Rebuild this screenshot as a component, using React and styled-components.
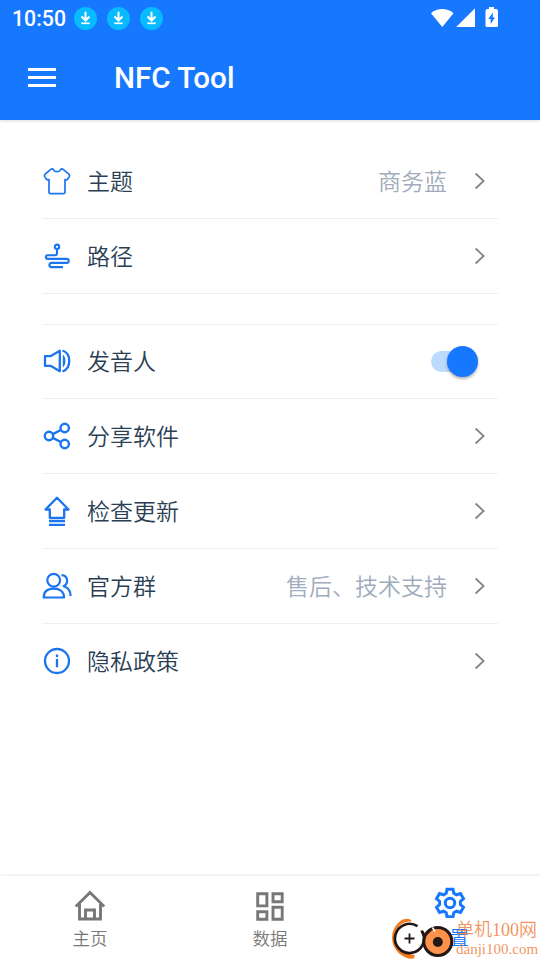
import { useState } from "react";
import styled, { createGlobalStyle } from "styled-components";

const BLUE = "#1677ff";

const rowGroups = [
  [
    { id: "theme", label: "主题", value: "商务蓝", icon: ShirtIcon },
    { id: "path", label: "路径", icon: PathIcon },
  ],
  [
    { id: "speaker", label: "发音人", icon: SpeakerIcon, toggle: true },
    { id: "share", label: "分享软件", icon: ShareIcon },
    { id: "update", label: "检查更新", icon: UpdateIcon },
    { id: "group", label: "官方群", value: "售后、技术支持", icon: UsersIcon },
    { id: "privacy", label: "隐私政策", icon: InfoIcon },
  ],
];

const tabs = [
  { id: "home", label: "主页", icon: HomeIcon },
  { id: "data", label: "数据", icon: GridIcon },
  { id: "settings", label: "设置", icon: GearIcon },
];

function App() {
  const [activeTab, setActiveTab] = useState("settings");
  const [speakerOn, setSpeakerOn] = useState(true);

  return (
    <Screen>
      <GlobalStyle />
      <Header>
        <StatusBar>
          <Clock>10:50</Clock>
          <DownloadBadge />
          <DownloadBadge />
          <DownloadBadge />
          <StatusIcons />
        </StatusBar>
        <TitleBar>
          <MenuButton aria-label="menu">
            <span />
            <span />
            <span />
          </MenuButton>
          <h1>NFC Tool</h1>
        </TitleBar>
      </Header>

      <Content>
        {rowGroups.map((rows, i) => (
          <Group key={i} $divided={i > 0}>
            {rows.map(({ id, label, value, icon: Icon, toggle }, n) => (
              <Row key={id} $last={i > 0 && n === rows.length - 1}>
                <Icon />
                <RowLabel>{label}</RowLabel>
                {value && <RowValue>{value}</RowValue>}
                {toggle ? (
                  <Switch
                    role="switch"
                    aria-checked={speakerOn}
                    $on={speakerOn}
                    onClick={() => setSpeakerOn(!speakerOn)}
                  />
                ) : (
                  <ChevronIcon />
                )}
              </Row>
            ))}
          </Group>
        ))}
      </Content>

      <TabBar>
        {tabs.map(({ id, label, icon: Icon }) => (
          <Tab
            key={id}
            $active={activeTab === id}
            onClick={() => setActiveTab(id)}
          >
            <Icon />
            <span>{label}</span>
          </Tab>
        ))}
      </TabBar>

      {/* Site mark */}
      <Watermark>
        <MarkLogo />
        <MarkText>
          <strong>单机100网</strong>
          <small>danji100.com</small>
        </MarkText>
      </Watermark>
    </Screen>
  );
}

export default App;

function DownloadBadge() {
  return (
    <Badge>
      <svg width="23" height="23" viewBox="0 0 23 23" fill="none">
        <path d="M11.500 4.800v8.500M7.500 9.500l4 4 4-4" stroke="#fff" strokeWidth="2" />
        <path d="M7.300 16.300h8.400" stroke="#fff" strokeWidth="1.700" />
      </svg>
    </Badge>
  );
}

function StatusIcons() {
  return (
    <StatusSvg width="68" height="22" viewBox="0 0 68 22" fill="#fff">
      <path d="M0 6.200C6.500.6 16 .6 22.500 6.200L11.300 20z" />
      <path d="M44 1.200V20H25.200z" />
      <path
        fillRule="evenodd"
        d="M58 0h5v2h2a2 2 0 0 1 2 2v14.500a1.500 1.500 0 0 1-1.500 1.500h-9.500a1.500 1.500 0 0 1-1.500-1.500V4a2 2 0 0 1 2-2h1.500zM61.800 5.500l-4.500 6.500h2.400v5l4.300-6.500h-2.200z"
      />
    </StatusSvg>
  );
}

function ShirtIcon() {
  return (
    <RowSvg viewBox="0 0 30 30" strokeWidth="1.700">
      <path d="M8.800 3.400c1.300-.9 2.200-.6 2.900.8.800 2 5.800 2 6.600 0 .7-1.400 1.600-1.700 2.900-.8l5.700 4.800c.8.800.9 1.600.4 2.400l-1.600 2.400c-.6.900-1.500 1-2.700.6V26c0 1.100-.6 1.600-1.700 1.600H8.700c-1.100 0-1.700-.5-1.700-1.600V13.600c-1.200.4-2.100.3-2.700-.6l-1.600-2.400c-.5-.8-.4-1.600.4-2.400z" />
    </RowSvg>
  );
}

function PathIcon() {
  return (
    <RowSvg viewBox="0 0 30 30" strokeWidth="2.100">
      <circle cx="15" cy="5.800" r="2.200" />
      <path d="M15 8.300v4c0 1.200-.7 1.900-1.900 1.900H5.700a1.850 1.850 0 0 0 0 3.700h19a2 2 0 0 1 0 4H9.500a2.100 2.100 0 0 0 0 4.200H21" />
    </RowSvg>
  );
}

function SpeakerIcon() {
  return (
    <RowSvg viewBox="0 0 30 30" strokeWidth="2.300">
      <path d="M3 10.200h5.500L17.800 4.800v20.400l-9.300-5.400H3z" />
      <path d="M20.500 4.500C29.500 7.500 29.500 22.500 20.500 25.500" />
      <path d="M20.800 8.500c3.500 2.500 3.500 10.500 0 13z" fill="#1a75ee" stroke="none" />
    </RowSvg>
  );
}

function ShareIcon() {
  return (
    <RowSvg viewBox="0 0 30 30" strokeWidth="2.400">
      <circle cx="7" cy="15" r="4.200" />
      <circle cx="22.700" cy="7" r="4.200" />
      <circle cx="22.700" cy="23" r="4.200" />
      <path d="M10.800 13.100l8-4.100M10.800 16.900l8 4.100" />
    </RowSvg>
  );
}

function UpdateIcon() {
  return (
    <RowSvg viewBox="0 0 30 30" strokeWidth="2.300">
      <path d="M15 1.700L26.500 13.500h-4.300v8.300H7.800v-8.300H3.500z" />
      <path d="M7 25h16M7 28.800h16" />
    </RowSvg>
  );
}

function UsersIcon() {
  return (
    <RowSvg viewBox="0 0 30 30" strokeWidth="2.200">
      <circle cx="11.700" cy="9.200" r="6.400" />
      <path d="M1.700 26.500c0-6 4-8.900 10-8.900s10.400 2.900 10.400 8.900z" />
      <path d="M19.500 4.200c6.500.5 7.500 8.200 2.200 11 4.500 1.300 6.900 4.600 6.900 9.800" />
    </RowSvg>
  );
}

function InfoIcon() {
  return (
    <RowSvg viewBox="0 0 30 30" strokeWidth="2.300">
      <circle cx="15" cy="15" r="12" />
      <path d="M15 8.500v2.500M15 13v8.300" />
    </RowSvg>
  );
}

function ChevronIcon() {
  return (
    <svg width="12" height="18" viewBox="0 0 12 18" fill="none">
      <path d="M1.600 1.500L9.600 9l-8 7.500" stroke="#858585" strokeWidth="1.800" />
    </svg>
  );
}

function HomeIcon() {
  return (
    <TabSvg viewBox="0 0 32 32" strokeWidth="2.900">
      <path d="M1.800 17.500L16 3.500l14.200 14" />
      <path d="M5.500 15v15h21V15M11.500 30v-9h9v9" />
    </TabSvg>
  );
}

function GridIcon() {
  return (
    <TabSvg viewBox="0 0 32 32" strokeWidth="2.900">
      <path d="M3.700 4.700h9.200v12.200H3.700zM19 4.700h9.200v8.100H19zM3.700 22.800h9.200v7.500H3.700zM19 18.300h9.200v12H19z" />
    </TabSvg>
  );
}

function GearIcon() {
  return (
    <TabSvg viewBox="0 0 32 32" strokeWidth="3">
      <path d="M13 3.200h6l.8 4 2.700 1.600 4-1.300 3 5.200-3.100 2.700v3.200l3.100 2.700-3 5.200-4-1.300-2.700 1.600-.8 4h-6l-.8-4-2.700-1.600-4 1.300-3-5.200 3.100-2.700v-3.200l-3.100-2.700 3-5.200 4 1.300 2.700-1.600z" />
      <circle cx="16" cy="17" r="4.700" />
    </TabSvg>
  );
}

function MarkLogo() {
  return (
    <svg width="66" height="44" viewBox="0 0 66 44" fill="none">
      <path d="M22 5.500C20 1.500 13 2 8 7 0 15 0 28 8 36.500c5 5 11 6.800 15.500 6.200L25 39C15 38 5 32 5 21 5 11 12 5 22 5.500z" fill="#f57c1d" />
      <path d="M31 14h12v16H31z" fill="#fff" />
      <circle cx="19.800" cy="22.500" r="15.300" fill="#fff" />
      <path
        d="M27.500 10.200A14.600 14.600 0 1 0 32.500 15.700"
        stroke="#231815"
        strokeWidth="2.700"
      />
      <path d="M14.500 22.500h10M19.500 17.500v10" stroke="#231815" strokeWidth="1.800" />
      <circle cx="47.800" cy="25.500" r="14" fill="#ff924a" stroke="#231815" strokeWidth="3" />
      <path d="M31.500 14.500l3.500 7.500M36 18l4.500-4" stroke="#231815" strokeWidth="2.600" />
      <path d="M42.500 11.500l2.500 4" stroke="#fff" strokeWidth="1.600" />
      <circle cx="47.800" cy="26" r="5" fill="#231815" />
    </svg>
  );
}

const GlobalStyle = createGlobalStyle`
  * {
    box-sizing: border-box;
  }
  body {
    margin: 0;
    background: #fff;
    font-family: Roboto, "Noto Sans CJK SC", sans-serif;
  }
  button {
    padding: 0;
    border: none;
    background: none;
    font: inherit;
    cursor: pointer;
  }
`;

const Screen = styled.div`
  position: relative;
  display: flex;
  flex-direction: column;
  width: 540px;
  height: 960px;
  overflow: hidden;
`;

const Header = styled.header`
  height: 120px;
  color: white;
  background: ${BLUE};
  box-shadow: 0 1px 3px rgba(0, 0, 0, 0.15);
`;

const StatusBar = styled.div`
  display: flex;
  align-items: center;
  height: 36px;
  padding-left: 12px;
`;

const Clock = styled.span`
  width: 62px;
  padding-top: 2px;
  font-size: 21.3px;
  font-weight: 500;
  line-height: 36px;
`;

const Badge = styled.span`
  display: flex;
  width: 23px;
  height: 23px;
  margin-right: 10px;
  border-radius: 50%;
  background: #08baff;
`;

const StatusSvg = styled.svg`
  margin-left: auto;
  margin-right: 41px;
`;

const TitleBar = styled.div`
  display: flex;
  align-items: center;
  height: 84px;
  padding-left: 28px;
  padding-bottom: 2px;
  h1 {
    margin: 0 0 0 58px;
    padding-top: 1px;
    font-size: 29.6px;
    font-weight: 500;
  }
`;

const MenuButton = styled.button`
  display: flex;
  flex-direction: column;
  gap: 5px;
  span {
    width: 28px;
    height: 3px;
    background: white;
  }
`;

const Content = styled.main`
  flex: 1;
  padding: 24px 42px 0;
`;

const Group = styled.section`
  margin-top: ${(props) => (props.$divided ? "30px" : "0")};
  box-shadow: ${(props) => (props.$divided ? "inset 0 1px #efefef" : "none")};
`;

const Row = styled.div`
  display: flex;
  align-items: center;
  height: 75px;
  padding-right: 12px;
  border-bottom: 1px solid ${(props) => (props.$last ? "transparent" : "#efefef")};
`;

const RowSvg = styled.svg`
  width: 30px;
  height: 30px;
  fill: none;
  stroke: #1a75ee;
  stroke-linejoin: round;
`;

const RowLabel = styled.span`
  flex: 1;
  margin-left: 15px;
  padding-bottom: 2px;
  color: #2a3f54;
  font-family: "Noto Sans CJK SC", sans-serif;
  font-size: 23px;
  font-weight: 350;
  line-height: 34px;
`;

const RowValue = styled.span`
  margin-right: 27px;
  padding-bottom: 2px;
  color: #a0abbb;
  font-family: "Noto Sans CJK SC", sans-serif;
  font-size: 23px;
  font-weight: 350;
  line-height: 34px;
`;

const Switch = styled.button`
  position: relative;
  width: 44px;
  height: 21px;
  margin-right: 11px;
  border-radius: 11px;
  background: ${(props) => (props.$on ? "#bddaff" : "#ccc")};
  &::after {
    content: "";
    position: absolute;
    top: -5px;
    left: ${(props) => (props.$on ? "16px" : "-2px")};
    width: 31px;
    height: 31px;
    border-radius: 50%;
    background: ${(props) => (props.$on ? BLUE : "white")};
    box-shadow: 0 2px 3px rgba(0, 0, 0, 0.3);
  }
`;

const TabBar = styled.nav`
  display: flex;
  height: 84px;
  background: white;
  box-shadow: 0 -1px 3px rgba(0, 0, 0, 0.08);
`;

const Tab = styled.button`
  display: flex;
  flex: 1;
  flex-direction: column;
  align-items: center;
  padding-top: ${(props) => (props.$active ? "10px" : "13px")};
  color: ${(props) => (props.$active ? BLUE : "#777")};
  span {
    font-family: "Noto Sans CJK SC", sans-serif;
    font-size: ${(props) => (props.$active ? "19px" : "17.5px")};
    font-weight: 350;
    line-height: ${(props) => (props.$active ? "38px" : "34px")};
  }
`;

const TabSvg = styled.svg`
  width: 32px;
  height: 32px;
  fill: none;
  stroke: currentColor;
`;

const Watermark = styled.div`
  position: absolute;
  right: 2px;
  bottom: 0;
  display: flex;
  align-items: flex-end;
  pointer-events: none;
`;

const MarkText = styled.div`
  display: flex;
  flex-direction: column;
  width: 82px;
  padding-bottom: 2px;
  color: rgba(240, 128, 66, 0.85);
  font-family: "Liberation Serif", "Noto Sans CJK SC", serif;
  white-space: nowrap;
  strong {
    font-size: 18px;
    font-weight: 350;
    line-height: 20px;
  }
  small {
    font-size: 15px;
    line-height: 18px;
  }
`;
